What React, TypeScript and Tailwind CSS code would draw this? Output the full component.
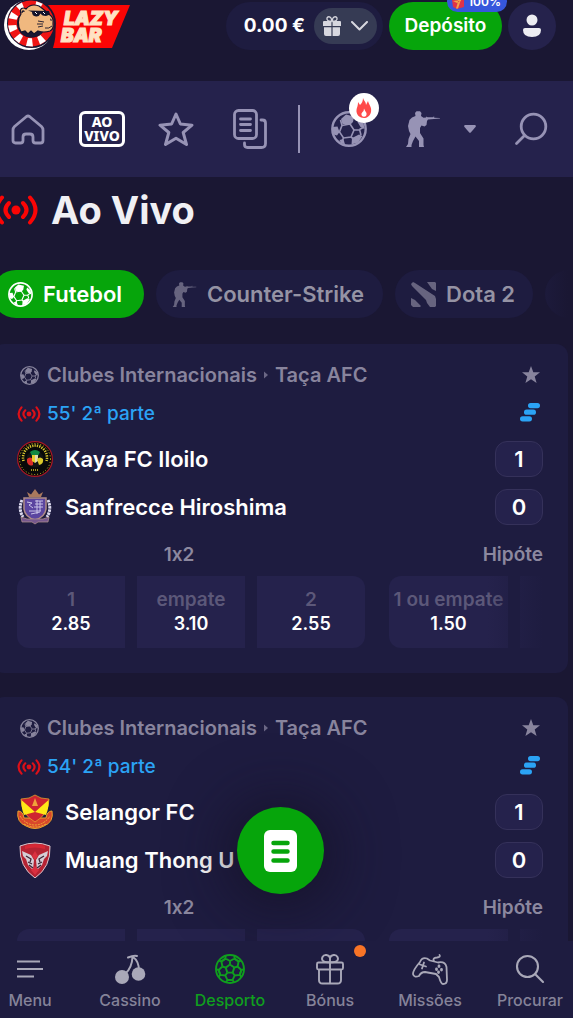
import type { ReactNode } from 'react';

type IconProps = { className?: string };

function Logo() {
  const stops = [22, 148, 184, 220, 256, 292, 328];
  return (
    <svg className="block h-[52px] w-[132px]" viewBox="0 0 132 52" aria-hidden="true">
      <path d="M48 5H130L112 48H53Q60 25 48 5Z" fill="#fb0505" />
      <g fill="#ffe3c4" fontFamily="Inter, sans-serif" fontStyle="italic" fontWeight="900" stroke="#ffe3c4" strokeWidth="1.200">
        <text x="64" y="25" fontSize="19">LAZY</text>
        <text x="61" y="42" fontSize="19">BAR</text>
      </g>
      <circle cx="29" cy="25" r="25" fill="#fff" />
      <circle cx="31.500" cy="23.500" r="24.500" fill="#1a1733" />
      <circle cx="31" cy="23.500" r="18.500" fill="none" stroke="#ef1515" strokeWidth="9" />
      {stops.map((a) => (
        <path key={a} d="M27.500 0.800h7l-1.500 8h-4z" fill="#fff" transform={`rotate(${a} 31 23.500)`} />
      ))}
      <circle cx="32" cy="23.500" r="14" fill="#1a1733" />
      <path d="M21 32C17 26 18 18 21 14C19 8 23 7 26 9Q31 3 39 6L43 9L50 15Q54 18 53 24Q54 29 50 31Q44 33 38 31L34 34L31 31L28 34L25 31Z" fill="#f0b87f" stroke="#14122a" strokeWidth="1.200" />
      <path d="M22 13q0-3 2.500-1.500" fill="none" stroke="#14122a" strokeWidth="1.300" />
      <path d="M28 10.500L49 11L50 14.500L46 16Q42 16 40.500 13.500Q39 17 36 16.500Q32 16 32 12Z" fill="#14122a" />
      <path d="M35 12l2 2M43 12l2 2" stroke="#fff" strokeWidth="1" />
      <path d="M50 19q2 0 1 2M38 21l6 1M37 24l6 0M38 27l5-1M45 28q4 1 7-2" fill="none" stroke="#14122a" strokeWidth="0.900" />
    </svg>
  );
}

function GiftSolid({ className }: IconProps) {
  return (
    <svg className={className} viewBox="0 0 18 20" fill="currentColor" aria-hidden="true">
      <path d="M1 5H8.400V10H0V6a1 1 0 0 1 1-1ZM9.600 5H17a1 1 0 0 1 1 1v4H9.600ZM1 11.200H8.400V20H3a2 2 0 0 1-2-2ZM9.600 11.200H17V18a2 2 0 0 1-2 2H9.600Z" />
      <path d="M9 5C5 5.500 3.500 4 4 2C4.500 0.300 7 0.300 8 2L9 5L10 2C11 0.300 13.500 0.300 14 2C14.500 4 13 5.500 9 5Z" fill="none" stroke="currentColor" strokeWidth="1.300" />
    </svg>
  );
}

function SoccerBall({ className }: IconProps) {
  return (
    <svg className={className} viewBox="0 0 36 36" fill="none" stroke="currentColor" aria-hidden="true">
      <circle cx="18" cy="18" r="16.700" strokeWidth="2.400" />
      <path d="M11 14.500L19 13L23 19L20 26L12.500 27L8.500 21Z" strokeWidth="1.600" />
      <path d="M11 14.500L9.500 9M19 13L21 10.500M23 19H29M20 26L22 27.500M12.500 27L11 30M8.500 21L6 21M28.500 18.500L33 16M28.500 18.500L30 24" strokeWidth="1.600" />
      <path d="M10 8L15 3.500L23 5.500L22 11L18.500 13.500L11.500 13ZM1.500 16L6.500 15.500L8.500 21L6 24.500L2.500 23.500ZM21 27L28 23.500L31.500 25L27 31.500L20.500 33.500ZM27.500 8L32.500 12L33.500 18L29.500 16L26.500 11ZM8.500 29L12.500 28L14 33.500L10 32Z" fill="currentColor" stroke="none" />
    </svg>
  );
}

function Soldier({ className }: IconProps) {
  return (
    <svg className={className} viewBox="0 0 34 36" fill="currentColor" aria-hidden="true">
      <path d="M9 2L10.500 0.300H14L15.500 2L15 5L17.500 6.800L20 6.500L20.500 5.400L21.500 6.300L27.500 6.300V5.500H28.200V6.700L34 7V7.600L28 8L22 8.500L21 10L20.500 14L18.500 15.500L15.500 14.500L14 17L14 22L17.500 27.500V34L18 36H13V30L9.500 25.500L7 30L5.500 34V36H0L2 33L2.500 28L4.500 23L3 20L2 15L3.500 9L6 6.500L9.500 5Z" />
    </svg>
  );
}

function DotaMark({ className }: IconProps) {
  return (
    <svg className={className} viewBox="0 0 25 25" fill="currentColor" aria-hidden="true">
      <path d="M2 0L4 1L24 14L25 17V24L24 25H19L16 21L15 18L1 4L0 2ZM16 0H24L25 1V9L21 7ZM0 16L4 18L10 24L9 25H2L0 23Z" />
    </svg>
  );
}

function LiveSignal({ className }: IconProps) {
  return (
    <svg className={className} viewBox="0 0 44 30" fill="none" stroke="currentColor" strokeWidth="4" strokeLinecap="round" aria-hidden="true">
      <circle cx="22" cy="15" r="4.500" fill="currentColor" stroke="none" />
      <path d="M15 8Q8 15 15 22M29 8Q36 15 29 22M8 2.500Q-3 15 8 27.500M36 2.500Q47 15 36 27.500" />
    </svg>
  );
}

function HomeIcon() {
  return (
    <svg className="h-[34px] w-[34px]" viewBox="0 0 34 34" fill="none" stroke="currentColor" strokeWidth="2.800" strokeLinejoin="round" aria-hidden="true">
      <path d="M15.500 4.500Q17 3.400 18.500 4.500L30.500 14.500Q32 16 32 18V28.500Q32 31 29.500 31H24.500Q22 31 22 28.500V25Q22 22 19 22H15Q12 22 12 25V28.500Q12 31 9.500 31H4.500Q2 31 2 28.500V18Q2 16 3.500 14.500Z" />
    </svg>
  );
}

function StarOutline() {
  return (
    <svg className="h-9 w-9" viewBox="0 0 36 36" fill="none" stroke="currentColor" strokeWidth="3" strokeLinejoin="round" aria-hidden="true">
      <path d="M18 3L22.400 13L34 14.200L25.200 21.500L28.500 33.500L18 27.300L7.500 33.500L10.800 21.500L2 14.200L13.600 13Z" />
    </svg>
  );
}

function SlipsIcon() {
  return (
    <svg className="h-10 w-[34px]" viewBox="0 0 34 40" fill="none" stroke="currentColor" strokeWidth="2.800" strokeLinecap="round" strokeLinejoin="round" aria-hidden="true">
      <rect x="1.500" y="1.500" width="22" height="28" rx="4" />
      <path d="M7.500 10h10M7.500 15.500h10M7.500 21.500h10M28 11h1.500q3 0 3 3V34.500q0 4-4 4H14.500q-3 0-3-3V34" />
    </svg>
  );
}

function SearchLeft() {
  return (
    <svg className="h-[34px] w-[34px]" viewBox="0 0 34 34" fill="none" stroke="currentColor" strokeWidth="2.800" strokeLinecap="round" aria-hidden="true">
      <circle cx="19.500" cy="14.500" r="12.300" />
      <path d="M10.500 23.500L2.500 31.500" />
    </svg>
  );
}

function Flame() {
  return (
    <svg className="h-5 w-4" viewBox="0 0 16 20" aria-hidden="true">
      <path d="M7 0C8 3 10 4 10 7L12 3C13 7 16 9 15 14C14 18 11 20 8 20C4 20 0 17 0.500 12C1 9 2 8 2 4L4 7C6 5 7 3 7 0Z" fill="#ff4a4a" />
      <path d="M8 10.500Q9 13 10.500 15Q11 18.500 8 18.700Q5 18.500 5.500 15.500L6.500 14Q8 13 8 10.500Z" fill="#fff" />
    </svg>
  );
}

function StarSolid() {
  return (
    <svg className="h-5 w-5" viewBox="0 0 20 20" fill="currentColor" aria-hidden="true">
      <path d="M10 1L12.300 7.300H19L13.700 11.500L15.600 18L10 14.200L4.400 18L6.300 11.500L1 7.300H7.700Z" />
    </svg>
  );
}

function Bars() {
  return (
    <svg className="h-[19px] w-5" viewBox="0 0 20 19" fill="#2ba3f5" aria-label="Estatísticas" role="img">
      <rect x="8" y="0" width="12" height="5.200" rx="2.600" />
      <rect x="4" y="6.600" width="12" height="5.200" rx="2.600" />
      <rect x="0" y="13.200" width="12" height="5.200" rx="2.600" />
    </svg>
  );
}

function KayaCrest() {
  return (
    <svg className="h-9 w-9" viewBox="0 0 36 36" aria-hidden="true">
      <circle cx="18" cy="18" r="17.400" fill="#080909" stroke="#a81824" strokeWidth="1.200" />
      <circle cx="18" cy="18" r="15.500" fill="none" stroke="#d9c52e" strokeWidth="1" strokeDasharray="1 2" />
      <path d="M6.500 20A12 12 0 1 1 29.500 20" fill="none" stroke="#d9c52e" strokeWidth="2.600" strokeDasharray="1.300 1.100" />
      <circle cx="18" cy="18" r="8.500" fill="#121414" />
      <path d="M13 11q5-4 10 0l-2 4h-6Z" fill="#118943" />
      <path d="M10 18q3-3 6 0v6q-4 2-6-3Z" fill="#d92d2a" />
      <path d="M15 14h3v8l-3-2Z" fill="#e7cf2b" />
      <path d="M18 14h3v6l-3 2Z" fill="#e3d9b0" />
      <path d="M20 18q3-3 6 0q1 5-4 6Z" fill="#dcc92a" />
      <path d="M14 29h8" stroke="#d9c52e" strokeWidth="1.500" strokeDasharray="1 1" />
    </svg>
  );
}

function HiroshimaCrest() {
  return (
    <svg className="h-9 w-9" viewBox="0 0 36 36" aria-hidden="true">
      <path d="M12 8L10 3L14 5.500L18 0L22 5.500L26 3L24 8Z" fill="#aa795d" />
      <path d="M5 11Q1 20 6 28M31 11Q35 20 30 28" fill="none" stroke="#dcd9ee" strokeWidth="3" strokeDasharray="2.500 .7" />
      <path d="M7 9H29V20Q28 28 18 31Q8 28 7 20Z" fill="#5b45a0" stroke="#b08c87" strokeWidth="1.500" />
      <path d="M10 13l5 1-3 2 4 3M18 12h8M18 15h8M17 18h9M20 11v14M23 12v10M12 22h12M14 25l9-2" fill="none" stroke="#c9c2e8" strokeWidth="1" />
      <path d="M4 28L10 30H26L32 28L31 33H21L18 35L15 33H5Z" fill="#76578e" stroke="#b6958c" strokeWidth=".7" />
    </svg>
  );
}

function SelangorCrest() {
  return (
    <svg className="h-9 w-9" viewBox="0 0 36 36" aria-hidden="true">
      <path d="M1 17Q6 17 7 24L29 24Q30 17 35 17Q37 28 27 32Q18 37 9 32Q-1 28 1 17Z" fill="#d9472b" stroke="#e9a12d" strokeWidth="1" />
      <path d="M3 22Q9 31 18 31Q27 31 33 22M7 30q11 6 22 0" fill="none" stroke="#efb235" strokeWidth="1" strokeDasharray="2 1" />
      <path d="M4 5Q13 5 18 1Q23 5 32 5Q32 20 18 28Q4 20 4 5Z" fill="#cf2430" stroke="#e9a12d" strokeWidth=".8" />
      <path d="M4.500 6L18 18L7 21Q4 14 4.500 6ZM31.500 6L18 18L29 21Q32 14 31.500 6Z" fill="#ffe817" />
      <path d="M18 4l1.500 4 1.500 4h-6l1.500-4Z" fill="#f0a23a" />
    </svg>
  );
}

function MuangCrest() {
  return (
    <svg className="h-9 w-9" viewBox="0 0 36 36" aria-hidden="true">
      <path d="M3 4Q18-2 33 4Q34 25 18 36Q2 25 3 4Z" fill="#b62333" stroke="#d8c6cd" strokeWidth="1" />
      <path d="M8 4Q18 0 28 4V7Q18 4 8 7Z" fill="#d72835" />
      <path d="M5 9L14 13L17 18L16 28L11 23L9 17L6 14ZM31 9L22 13L19 18L20 28L25 23L27 17L30 14Z" fill="#d5cdd5" />
      <path d="M9 14l5 3-1 3M27 14l-5 3 1 3M11 20l4 2M25 20l-4 2M12 23l4 3M24 23l-4 3" fill="none" stroke="#3c2536" strokeWidth="1.300" />
      <path d="M18 9L21 14L18 18L15 14ZM14 28L18 24L22 28L18 33Z" fill="#da3040" />
    </svg>
  );
}

function MenuIcon() {
  return (
    <svg className="h-8 w-8" viewBox="0 0 32 32" stroke="currentColor" strokeWidth="2" aria-hidden="true">
      <path d="M3 8.500h23M3 16h26M3 23.500h17" />
    </svg>
  );
}

function CherryIcon() {
  return (
    <svg className="h-8 w-8" viewBox="0 0 32 32" fill="currentColor" aria-hidden="true">
      <circle cx="8" cy="24" r="7" />
      <circle cx="24.500" cy="21" r="6.800" />
      <path d="M14 4.500Q20 2 23 3M18.500 4Q18 15 11 21M19 4Q25 8 25 18" fill="none" stroke="currentColor" strokeWidth="2" strokeLinecap="round" />
    </svg>
  );
}

function NavBall() {
  return (
    <svg className="h-8 w-8" viewBox="0 0 32 32" fill="none" stroke="currentColor" strokeWidth="1.900" strokeLinejoin="round" aria-hidden="true">
      <circle cx="16" cy="16" r="14" />
      {[0, 72, 144, 216, 288].map((a) => (
        <path key={a} d="M16 11.500L20.300 14.600M16 11.500V8M16 8L11.500 5.500L11.500 3M16 8L20.500 5.500L20.500 3M11.500 5.500L7.500 8.500M20.500 5.500L24.500 8.500" transform={`rotate(${a} 16 16)`} />
      ))}
    </svg>
  );
}

function GiftOutline() {
  return (
    <svg className="h-8 w-8" viewBox="0 0 32 32" fill="none" stroke="currentColor" strokeWidth="1.900" strokeLinejoin="round" aria-hidden="true">
      <rect x="3" y="9.500" width="26" height="7" rx="1.500" />
      <path d="M5 16.500V27q0 3.500 3.500 3.500h15q3.500 0 3.500-3.500V16.500M16 9.500v21M16 9C9 10 7 7 8.500 4C10 1 15 1.500 16 5V9C23 10 25 7 23.500 4C22 1 17 1.500 16 5" />
    </svg>
  );
}

function GamepadIcon() {
  return (
    <svg className="h-8 w-9" viewBox="0 0 36 32" fill="none" stroke="currentColor" strokeWidth="1.800" strokeLinecap="round" strokeLinejoin="round" aria-hidden="true">
      <path d="M8 9Q10 4 15 5.500L18 7.500L26 9.500Q33 8 34.500 14L35 27Q35 31 31 31Q29 31 27 24L24 21L13 19Q9 19 7 23Q2 25 1 21Q1 17 8 9ZM22 8Q20 5 25 4.500Q29 4 27.500 2M12 9.500l-2 6M8 11.500l6 2" />
      <path d="M27 13v.5M24.500 16v.5M29.500 16.500v.5M26.500 19v.5" strokeWidth="2.800" />
    </svg>
  );
}

function SearchIcon() {
  return (
    <svg className="h-8 w-8" viewBox="0 0 32 32" fill="none" stroke="currentColor" strokeWidth="2.100" strokeLinecap="round" aria-hidden="true">
      <circle cx="13.500" cy="13.500" r="10.500" />
      <path d="M21 21L29 29" />
    </svg>
  );
}

function TopItem({ label, children, active }: { label: string; children: ReactNode; active?: boolean }) {
  return (
    <button type="button" aria-label={label} className={`flex h-24 w-[74px] shrink-0 items-center justify-center ${active ? 'text-white' : 'text-[#9793b5]'}`}>
      {children}
    </button>
  );
}

function Odd({ name, price, className }: { name: string; price: string; className: string }) {
  return (
    <button type="button" className={`flex h-[72px] shrink-0 flex-col items-center justify-center bg-[#25224c] font-semibold whitespace-nowrap ${className}`}>
      <span className="text-[19px] leading-6 text-[#5c5879]">{name}</span>
      <span className="text-lg leading-6 text-white">{price}</span>
    </button>
  );
}

type Team = { name: string; score: number; crest: ReactNode };

function MatchCard({ time, teams }: { time: string; teams: Team[] }) {
  return (
    <article className="rounded-xl bg-[#1e1c40] pt-[13px] pr-[25px] pb-[25px] pl-[25px]">
      <div className="flex h-9 items-center text-xl font-semibold text-[#88849d]">
        <SoccerBall className="mr-2 ml-[3px] h-[19px] w-[19px]" />
        <span>Clubes Internacionais</span>
        <svg className="mx-[6px] h-2 w-[6px] text-[#6b6785]" viewBox="0 0 6 8" fill="currentColor" aria-hidden="true">
          <path d="M1 0.500L5 4L1 7.500Z" />
        </svg>
        <span>Taça AFC</span>
        <button type="button" aria-label="Favorito" className="mr-[2px] ml-auto"><StarSolid /></button>
      </div>
      <div className="flex h-[42px] items-center text-[19px] font-medium text-[#2ba3f5]">
        <LiveSignal className="mr-[6px] h-4 w-6 text-[#dd1018]" />
        <span>{time}</span>
        <span className="mr-[3px] mb-1 ml-auto"><Bars /></span>
      </div>
      {teams.map((team) => (
        <div key={team.name} className="flex h-12 items-center text-[22px] font-semibold text-white">
          {team.crest}
          <span className="ml-3">{team.name}</span>
          <span className="ml-auto flex h-9 w-12 items-center justify-center rounded-xl border border-[#35315a] bg-[#25224c]">{team.score}</span>
        </div>
      ))}
      <div className="relative flex gap-6 overflow-hidden">
        <section className="shrink-0">
          <h3 className="h-[45px] pt-[11px] pr-6 text-center text-[19px] leading-[26px] font-semibold text-[#8c889f]">1x2</h3>
          <div className="flex gap-3">
            <Odd name="1" price="2.85" className="w-[108px] rounded-l-xl" />
            <Odd name="empate" price="3.10" className="w-[108px]" />
            <Odd name="2" price="2.55" className="w-[108px] rounded-r-xl" />
          </div>
        </section>
        <section className="min-w-0 flex-1">
          <h3 className="h-[45px] pt-[11px] text-right text-[19px] leading-[26px] font-semibold text-[#8c889f]">Hipóte</h3>
          <div className="flex gap-3">
            <Odd name="1 ou empate" price="1.50" className="w-[119px] rounded-l-xl" />
            <span className="h-[72px] w-[119px] shrink-0 bg-[#25224c]" />
          </div>
        </section>
        <span className="pointer-events-none absolute right-0 bottom-0 h-[72px] w-14 bg-linear-to-r from-transparent to-[#1e1c40]" />
      </div>
    </article>
  );
}

const matches = [
  {
    time: "55' 2ª parte",
    teams: [
      { name: 'Kaya FC Iloilo', score: 1, crest: <KayaCrest /> },
      { name: 'Sanfrecce Hiroshima', score: 0, crest: <HiroshimaCrest /> },
    ],
  },
  {
    time: "54' 2ª parte",
    teams: [
      { name: 'Selangor FC', score: 1, crest: <SelangorCrest /> },
      { name: 'Muang Thong U', score: 0, crest: <MuangCrest /> },
    ],
  },
];

const tabs = [
  { label: 'Menu', icon: <MenuIcon /> },
  { label: 'Cassino', icon: <CherryIcon /> },
  { label: 'Desporto', icon: <NavBall />, active: true },
  { label: 'Bónus', icon: <GiftOutline />, dot: true },
  { label: 'Missões', icon: <GamepadIcon /> },
  { label: 'Procurar', icon: <SearchIcon /> },
];

export default function App() {
  return (
    <div className="relative flex h-screen flex-col overflow-hidden bg-[#1a1733] font-['Inter',sans-serif] [font-feature-settings:'calt'_0]">
      <header className="flex h-[81px] shrink-0 items-start pr-[17px]">
        <a href="#" aria-label="Lazy Bar"><Logo /></a>
        <div className="mt-[2px] ml-auto flex h-12 items-center rounded-full bg-[#1e1c40] pr-[6px] pl-[18px]">
          <span className="mr-[9px] text-[19px] font-bold text-white">0.00 €</span>
          <button type="button" aria-label="Carteira de bónus" className="flex h-9 w-[63px] items-center justify-center gap-[10px] rounded-full bg-[#363b54] text-[#d7d7df]">
            <GiftSolid className="h-5 w-[18px]" />
            <svg className="h-[10px] w-[17px]" viewBox="0 0 17 10" fill="none" stroke="currentColor" strokeWidth="2" strokeLinecap="round" strokeLinejoin="round" aria-hidden="true">
              <path d="M1 1L8.500 8.500L16 1" />
            </svg>
          </button>
        </div>
        <div className="relative mt-[2px] ml-[6px]">
          <button type="button" className="h-12 w-[113px] rounded-full bg-[#06a50b] text-[19px] font-semibold text-white">Depósito</button>
          <span className="absolute -top-[11px] -right-[5px] flex h-[21px] w-[60px] items-center justify-end gap-1 rounded-full bg-[#3657dc] pr-[6px] text-xs font-semibold text-white">
            <svg className="h-[14px] w-3" viewBox="0 0 12 14" aria-hidden="true">
              <path d="M0 5L12 3V12L5 14L1 12Z" fill="#df3348" />
              <path d="M7 3.500L9.500 3L6 13.500L4 13.500ZM1 6L5 8L9 5Z" fill="#f2a349" />
            </svg>
            100%
          </span>
        </div>
        <button type="button" aria-label="Perfil" className="mt-[2px] ml-[6px] flex h-12 w-12 items-center justify-center rounded-full bg-[#25224c] text-[#ededf2]">
          <svg className="h-6 w-[18px]" viewBox="0 0 18 24" fill="currentColor" aria-hidden="true">
            <circle cx="9" cy="6" r="5.500" />
            <path d="M2 14H16Q18 14 18 16Q18 23 9 23Q0 23 0 16Q0 14 2 14Z" />
          </svg>
        </button>
      </header>

      <nav aria-label="Desportos" className="-ml-[9px] flex h-24 shrink-0 items-center bg-[#25224c] pr-[25px]">
        <TopItem label="Início"><HomeIcon /></TopItem>
        <TopItem label="Ao vivo" active>
          <span className="flex h-9 w-[46px] flex-col items-center justify-center rounded-md border-3 border-white font-['Noto_Sans',sans-serif] text-sm leading-[14px] font-extrabold">
            <span>AO</span>
            <span>VIVO</span>
          </span>
        </TopItem>
        <TopItem label="Favoritos"><StarOutline /></TopItem>
        <TopItem label="Apostas"><SlipsIcon /></TopItem>
        <span className="mr-3 ml-[11px] h-12 w-[2px] shrink-0 bg-[#9793b5]" />
        <TopItem label="Futebol">
          <span className="relative">
            <SoccerBall className="h-9 w-9" />
            <span className="absolute -top-[18px] -right-3 flex h-[30px] w-[30px] items-center justify-center rounded-full bg-white"><Flame /></span>
          </span>
        </TopItem>
        <TopItem label="Counter-Strike"><Soldier className="h-9 w-[34px]" /></TopItem>
        <button type="button" aria-label="Mais desportos" className="ml-1 text-[#9793b5]">
          <svg className="h-2 w-3" viewBox="0 0 12 8" fill="currentColor" aria-hidden="true">
            <path d="M1 0H11Q12.500 0.500 11.500 2L7 7.200Q6 8.300 5 7.200L0.500 2Q-0.500 0.500 1 0Z" />
          </svg>
        </button>
        <button type="button" aria-label="Procurar" className="ml-auto text-[#9793b5]"><SearchLeft /></button>
      </nav>

      <main className="mr-[5px] -ml-2 min-h-0 flex-1 overflow-hidden">
        <div className="flex h-[66px] items-center">
          <LiveSignal className="ml-[2px] h-[30px] w-[44px] text-[#fb0505]" />
          <h1 className="ml-[13px] text-[38px] leading-10 font-bold text-[#f0f0f4]">Ao Vivo</h1>
        </div>
        <div className="relative mt-[27px] flex gap-3 overflow-hidden text-[22px] font-semibold">
          <button type="button" className="flex h-12 w-[152px] shrink-0 items-center gap-[10px] rounded-full bg-[#06a50b] pl-4 text-white">
            <SoccerBall className="h-[25px] w-[25px]" />Futebol
          </button>
          <button type="button" className="flex h-12 w-[227px] shrink-0 items-center gap-[10px] rounded-full bg-[#1e1c40] pl-4 whitespace-nowrap text-[#9593a4]">
            <Soldier className="h-[25px] w-[25px] text-[#67647f]" />Counter-Strike
          </button>
          <button type="button" className="flex h-12 w-[138px] shrink-0 items-center gap-[10px] rounded-full bg-[#1e1c40] pl-4 whitespace-nowrap text-[#9593a4]">
            <DotaMark className="h-[25px] w-[25px] text-[#67647f]" />Dota 2
          </button>
          <span className="h-12 w-[120px] shrink-0 rounded-full bg-[#1e1c40]" />
          <span className="pointer-events-none absolute top-0 right-0 h-12 w-9 bg-linear-to-r from-transparent to-[#1a1733]" />
        </div>
        <div className="mt-[26px] flex flex-col gap-6">
          {matches.map((match) => (
            <MatchCard key={match.time} time={match.time} teams={match.teams} />
          ))}
        </div>
      </main>

      <button type="button" aria-label="Boletim de apostas" className="absolute bottom-[124px] left-1/2 -ml-[50px] flex h-[87px] w-[87px] items-center justify-center rounded-full bg-[#06a50b] shadow-[0_4px_60px_10px_rgba(20,16,34,0.7)]">
        <svg className="h-[42px] w-[33px]" viewBox="0 0 33 42" aria-hidden="true">
          <rect width="33" height="42" rx="6" fill="#fff" />
          <path d="M9.500 13h14M9.500 21.500h14M9.500 30.500h14" stroke="#06a50b" strokeWidth="4.500" strokeLinecap="round" />
        </svg>
      </button>

      <nav aria-label="Principal" className="relative -mr-[7px] -ml-5 flex h-[77px] shrink-0 bg-[#1e1c40]">
        {tabs.map((tab) => (
          <a key={tab.label} href="#" className={`relative flex flex-1 flex-col items-center pt-3 text-base leading-5 font-medium ${tab.active ? 'text-[#109f1e]' : 'text-[#858399]'}`}>
            <span className={`mb-[5px] ${tab.active ? '' : 'text-[#a9a8b8]'}`}>{tab.icon}</span>
            {tab.label}
            {tab.dot && <span className="absolute top-1 right-[14px] h-3 w-3 rounded-full bg-[#f97426]" />}
          </a>
        ))}
      </nav>
    </div>
  );
}
